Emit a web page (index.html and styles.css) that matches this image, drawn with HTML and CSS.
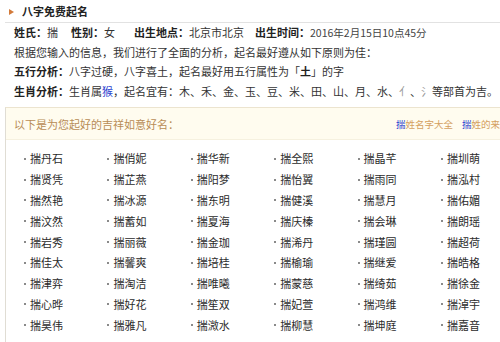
FILE: index.html
```html
<!DOCTYPE html>
<html lang="zh-CN">
<head>
<meta charset="utf-8">
<title>八字免费起名</title>
<link rel="stylesheet" href="styles.css">
</head>
<body>
<div class="page">
  <div class="title"><span class="arrow"></span><span class="title-text">八字免费起名</span></div>
  <div class="info">
    <p><b>姓氏：</b><span class="v1">揣</span><b>性别：</b><span class="v2">女</span><b>出生地点：</b><span class="v3">北京市北京</span><b>出生时间：</b><span class="date">2016年2月15日10点45分</span></p>
    <p>根据您输入的信息，我们进行了全面的分析，起名最好遵从如下原则为佳：</p>
    <p><b>五行分析：</b>八字过硬，八字喜土，起名最好用五行属性为「<b class="blue">土</b>」的字</p>
    <p><b>生肖分析：</b>生肖属<span class="blue">猴</span>，起名宜有：木、禾、金、玉、豆、米、田、山、月、水、<span class="light">亻</span>、<span class="light">氵</span>等部首为吉。</p>
  </div>
  <div class="box">
    <div class="box-head">
      <span class="lead">以下是为您起好的吉祥如意好名：</span>
      <span class="links"><a class="link"><span class="blue">揣</span>姓名字大全</a><a class="link"><span class="blue">揣</span>姓的来历</a></span>
    </div>
    <ul class="names">
      <li>揣丹石</li><li>揣俏妮</li><li>揣华新</li><li>揣全熙</li><li>揣晶芊</li><li>揣圳萌</li>
      <li>揣贤凭</li><li>揣芷燕</li><li>揣阳梦</li><li>揣怡翼</li><li>揣雨同</li><li>揣泓村</li>
      <li>揣然艳</li><li>揣冰源</li><li>揣东明</li><li>揣健溪</li><li>揣慧月</li><li>揣佑媚</li>
      <li>揣汶然</li><li>揣蓄如</li><li>揣夏海</li><li>揣庆榛</li><li>揣会琳</li><li>揣朗瑶</li>
      <li>揣岩秀</li><li>揣丽薇</li><li>揣金珈</li><li>揣浠丹</li><li>揣瑾圆</li><li>揣超荷</li>
      <li>揣佳太</li><li>揣馨爽</li><li>揣培桂</li><li>揣榆瑜</li><li>揣继爱</li><li>揣皓格</li>
      <li>揣津弈</li><li>揣淘洁</li><li>揣唯曦</li><li>揣蒙慈</li><li>揣绮茹</li><li>揣徐金</li>
      <li>揣心晔</li><li>揣好花</li><li>揣笙双</li><li>揣妃萱</li><li>揣鸿维</li><li>揣淖宇</li>
      <li>揣昊伟</li><li>揣雅凡</li><li>揣溦水</li><li>揣柳慧</li><li>揣坤庭</li><li>揣嘉音</li>
    </ul>
  </div>
</div>
</body>
</html>
```
FILE: styles.css
```css
html, body {
  margin: 0;
  padding: 0;
  overflow: hidden;
  background: #ffffff;
}
body {
  font-family: "Noto Sans CJK SC", "Noto Sans", sans-serif;
  font-size: 11px;
  color: #333333;
}
.page {
  width: 500px;
  height: 342px;
  overflow: hidden;
}
.title {
  height: 22px;
  margin-left: 5px;
  border-bottom: 1px solid #e2e2e2;
  display: flex;
  align-items: center;
  white-space: nowrap;
}
.arrow {
  width: 0;
  height: 0;
  border-top: 3px solid transparent;
  border-bottom: 3px solid transparent;
  border-left: 5px solid #d27a3a;
  margin-left: 4px;
  margin-right: 8px;
  margin-top: 1px;
}
.title-text {
  font-weight: bold;
  color: #222222;
  line-height: 22px;
}
.info {
  padding-left: 14px;
  white-space: nowrap;
}
.info p {
  margin: 0;
  height: 19.5px;
  line-height: 19.5px;
}
.info b {
  color: #222222;
}
.v1 { margin-right: 13px; }
.v2 { margin-right: 19px; }
.v3 { margin-right: 11px; }
.date {
  color: #444444;
  font-size: 10.5px;
}
.blue {
  color: #2a3fd0;
}
.light {
  color: #999999;
}
.box {
  margin-top: 6px;
  margin-left: 5px;
  width: 560px;
  border-top: 1px solid #ece4cf;
  border-left: 1px solid #e0ddd4;
  height: 260px;
}
.box-head {
  height: 31px;
  background: #fffcef;
  border-bottom: 1px solid #f6f1df;
  display: flex;
  align-items: center;
  padding-left: 8px;
  white-space: nowrap;
}
.lead {
  color: #b88c56;
  width: 382px;
}
.links {
  display: flex;
  gap: 9px;
  font-size: 9.5px;
}
.link {
  color: #d4a060;
}
.names {
  list-style: none;
  margin: 0;
  padding: 8px 0 0 18px;
  display: grid;
  grid-template-columns: repeat(6, 83.4px);
  grid-auto-rows: 20.8px;
  align-items: center;
}
.names li {
  white-space: nowrap;
  color: #2b2b2b;
  display: flex;
  align-items: center;
}
.names li::before {
  content: "";
  width: 2px;
  height: 2px;
  background: #8a8a8a;
  margin-right: 4px;
  margin-top: 1px;
}
```
